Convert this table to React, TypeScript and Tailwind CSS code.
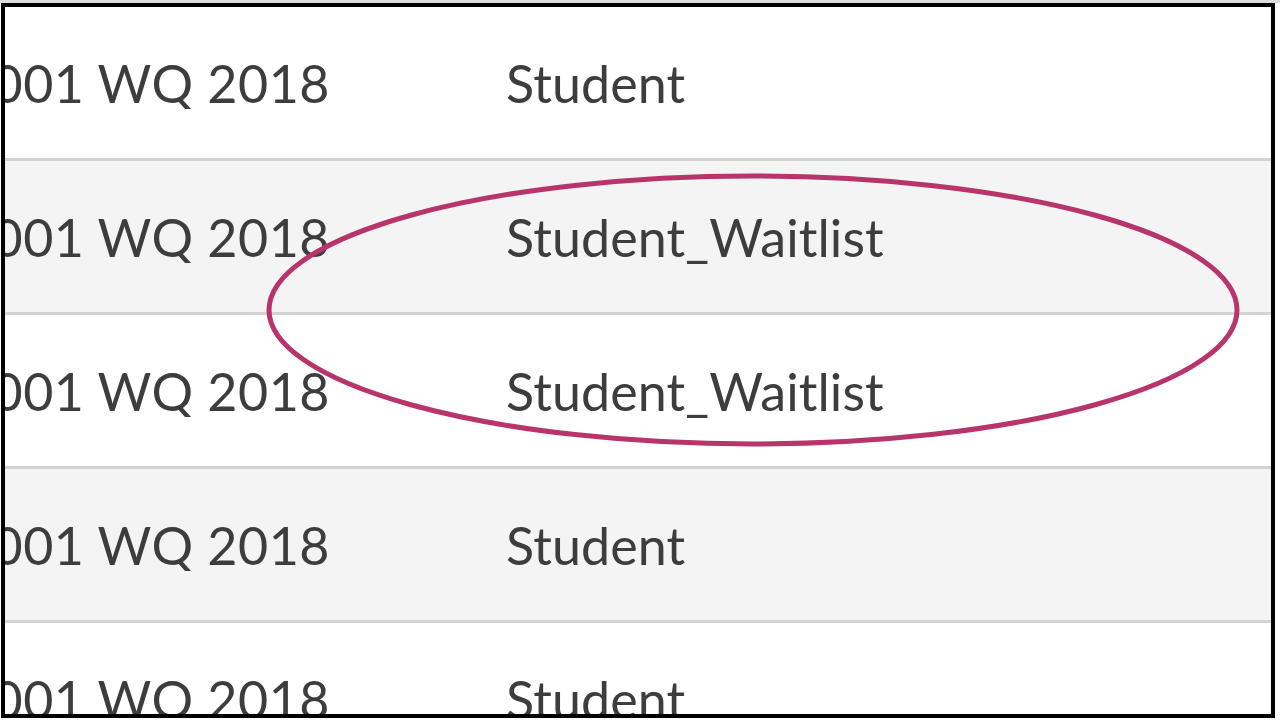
const rows = [
  { term: "001 WQ 2018", role: "Student" },
  { term: "001 WQ 2018", role: "Student_Waitlist" },
  { term: "001 WQ 2018", role: "Student_Waitlist" },
  { term: "001 WQ 2018", role: "Student" },
  { term: "001 WQ 2018", role: "Student" },
];

export default function App() {
  return (
    <div className="w-[1280px] h-[720px] bg-white border-t-[3px] border-[#dcdcdc] pl-[1px] overflow-hidden">
      <div
        className="relative w-[1274px] h-[715px] border-4 border-black overflow-hidden text-[#3d3d3d]"
        style={{ fontFamily: "Lato, 'Open Sans', sans-serif" }}
      >
        {rows.map((row, i) => (
          <div
            key={i}
            className={`flex items-center h-[154px] shrink-0 border-b-[3px] border-[#d3d3d3] ${
              i % 2 === 1 ? "bg-[#f4f4f4]" : "bg-white"
            }`}
          >
            <div className="w-[325px] flex justify-end overflow-hidden whitespace-nowrap">
              <span className="text-[52px] leading-none tracking-[0.5px]">{row.term}</span>
            </div>
            <div className="pl-[176px] whitespace-nowrap">
              <span className="text-[52px] leading-none tracking-[0.1px]">{row.role}</span>
            </div>
          </div>
        ))}

        {/* highlight ring around the waitlisted rows */}
        <svg className="absolute left-0 top-0 pointer-events-none" width="1266" height="707">
          <ellipse cx="748" cy="303" rx="484" ry="134" fill="none" stroke="#b8356c" strokeWidth="5" />
        </svg>
      </div>
    </div>
  );
}
